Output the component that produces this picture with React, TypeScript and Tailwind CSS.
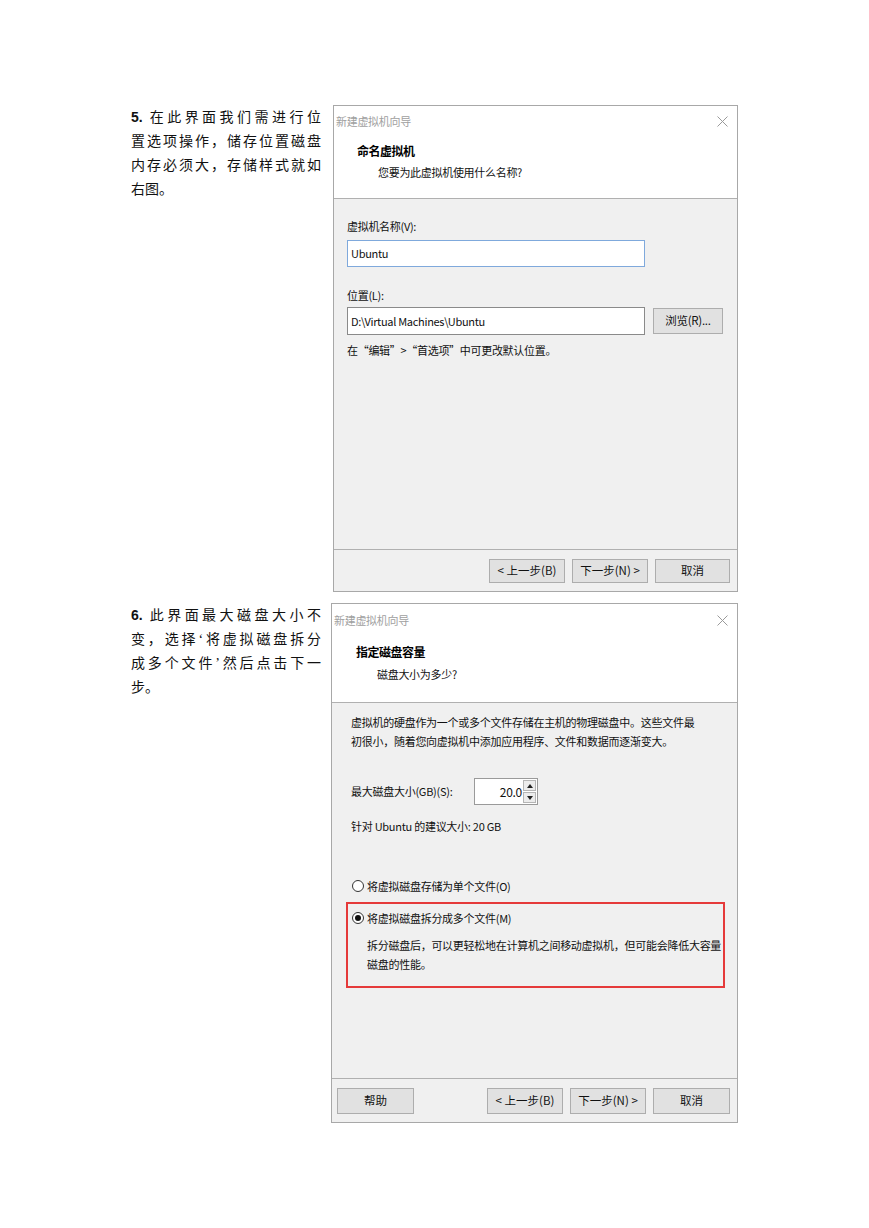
import React from 'react';

const UI = { fontFamily: '"Noto Sans CJK SC", "Liberation Sans", sans-serif' };
const DOC = { fontFamily: '"Liberation Serif", "Noto Sans CJK SC", serif' };

function CloseX() {
  return (
    <svg width="11" height="11" viewBox="0 0 11 11" className="shrink-0">
      <path d="M0.5 0.5 L10.5 10.5 M10.5 0.5 L0.5 10.5" stroke="#9a9a9a" strokeWidth="1" fill="none" />
    </svg>
  );
}

function Btn({ children, w, h = 'h-[24px]' }: { children: React.ReactNode; w: string; h?: string }) {
  return (
    <div
      className={`${w} ${h} flex items-center justify-center border border-[#adadad] bg-[#e1e1e1] text-[11.5px] text-[#111]`}
    >
      {children}
    </div>
  );
}

function Radio({ checked }: { checked?: boolean }) {
  return (
    <div className="flex h-[12px] w-[12px] shrink-0 items-center justify-center rounded-full border border-[#333] bg-white">
      {checked && <div className="h-[6px] w-[6px] rounded-full bg-[#111]" />}
    </div>
  );
}

function Para({ lines }: { lines: React.ReactNode[] }) {
  return (
    <div className="w-[190px] shrink-0 text-[14px] leading-[24px] text-[#111]" style={DOC}>
      {lines.map((l, i) => (
        <div key={i} className={i < lines.length - 1 ? 'text-justify [text-align-last:justify]' : ''}>
          {l}
        </div>
      ))}
    </div>
  );
}

function TitleBar({ h }: { h: string }) {
  return (
    <div className={`${h} flex items-center justify-between pl-[2px] pr-[9px]`}>
      <span className="text-[11px] tracking-[-0.3px] text-[#a0a0a0]">新建虚拟机向导</span>
      <CloseX />
    </div>
  );
}

export default function App() {
  return (
    <div className="min-h-[1228px] bg-white pl-[131px] pt-[105px]" style={UI}>
      {/* step 5 */}
      <div className="flex gap-[12px]">
        <Para
          lines={[
            <>
              <span className="font-semibold" style={{ fontFamily: '"Liberation Sans", sans-serif' }}>5.</span> 在此界面我们需进行位
            </>,
            '置选项操作，储存位置磁盘',
            '内存必须大，存储样式就如',
            '右图。',
          ]}
        />
        <div className="flex h-[487px] w-[405px] flex-col border border-[#a8a8a8]" style={UI}>
          <div className="bg-white">
            <TitleBar h="h-[30px]" />
            <div className="pb-[17px] pl-[23px] pt-[6px]">
              <div className="text-[12px] font-bold leading-[18px] tracking-[-0.5px] text-black">命名虚拟机</div>
              <div className="mt-[3px] pl-[21px] text-[11px] leading-[18px] tracking-[-0.3px] text-[#111]">
                您要为此虚拟机使用什么名称?
              </div>
            </div>
          </div>
          <div className="flex flex-1 flex-col border-t border-[#b0b0b0] bg-[#f0f0f0] pl-[13px] pt-[18px] text-[11px] tracking-[-0.3px] text-[#111]">
            <div className="leading-[18px]">虚拟机名称(V):</div>
            <div className="mt-[5px] flex h-[27px] w-[298px] items-center border border-[#7fa9dc] bg-white pl-[3px]">
              Ubuntu
            </div>
            <div className="mt-[19px] leading-[18px]">位置(L):</div>
            <div className="mt-[3px] flex items-center gap-[8px]">
              <div className="flex h-[28px] w-[298px] items-center border border-[#8a8a8a] bg-white pl-[3px]">
                D:\Virtual Machines\Ubuntu
              </div>
              <Btn w="w-[70px]" h="h-[26px]">浏览(R)...</Btn>
            </div>
            <div className="mt-[6px] leading-[18px]">在“编辑”&gt;“首选项”中可更改默认位置。</div>
          </div>
          <div className="flex h-[42px] justify-end gap-[7px] border-t border-[#b0b0b0] bg-[#f0f0f0] pr-[7px] pt-[9px]">
            <Btn w="w-[76px]">&lt; 上一步(B)</Btn>
            <Btn w="w-[76px]">下一步(N) &gt;</Btn>
            <Btn w="w-[75px]">取消</Btn>
          </div>
        </div>
      </div>

      {/* step 6 */}
      <div className="mt-[11px] flex gap-[10px]">
        <Para
          lines={[
            <>
              <span className="font-semibold" style={{ fontFamily: '"Liberation Sans", sans-serif' }}>6.</span> 此界面最大磁盘大小不
            </>,
            '变，选择‘将虚拟磁盘拆分',
            '成多个文件’然后点击下一',
            '步。',
          ]}
        />
        <div className="flex h-[520px] w-[407px] flex-col border border-[#a8a8a8]" style={UI}>
          <div className="bg-white">
            <TitleBar h="h-[32px]" />
            <div className="pb-[18px] pl-[24px] pt-[6px]">
              <div className="text-[12px] font-bold leading-[20px] tracking-[-0.5px] text-black">指定磁盘容量</div>
              <div className="mt-[2px] pl-[21px] text-[11px] leading-[20px] tracking-[-0.3px] text-[#111]">
                磁盘大小为多少?
              </div>
            </div>
          </div>
          <div className="flex flex-1 flex-col border-t border-[#b0b0b0] bg-[#f0f0f0] pl-[19px] pt-[10px] text-[11px] tracking-[-0.27px] text-[#111]">
            <div className="leading-[19px]">
              虚拟机的硬盘作为一个或多个文件存储在主机的物理磁盘中。这些文件最
              <br />
              初很小，随着您向虚拟机中添加应用程序、文件和数据而逐渐变大。
            </div>
            <div className="mt-[27px] flex items-center">
              <div className="w-[123px]">最大磁盘大小(GB)(S):</div>
              <div className="flex h-[27px] border border-[#9a9a9a] bg-white">
                <div className="flex w-[48px] items-center justify-end pr-[1px] text-[12px]">20.0</div>
                <div className="flex w-[14px] flex-col gap-[1px] py-[1px] pr-[1px]">
                  <div className="flex flex-1 items-center justify-center border border-[#b5b5b5] bg-[#ececec]">
                    <svg width="6" height="4" viewBox="0 0 6 4"><path d="M0 4 L3 0 L6 4 Z" fill="#222" /></svg>
                  </div>
                  <div className="flex flex-1 items-center justify-center border border-[#b5b5b5] bg-[#ececec]">
                    <svg width="6" height="4" viewBox="0 0 6 4"><path d="M0 0 L3 4 L6 0 Z" fill="#222" /></svg>
                  </div>
                </div>
              </div>
            </div>
            <div className="mt-[12px] leading-[18px]">针对 Ubuntu 的建议大小: 20 GB</div>
            <div className="ml-[1px] mt-[42px] flex items-center gap-[3px] leading-[18px]">
              <Radio />
              <span>将虚拟磁盘存储为单个文件(O)</span>
            </div>
            <div className="-ml-[5px] mt-[7px] w-[379px] border-2 border-[#e53a3a] pb-[12px] pl-[4px] pt-[5px]">
              <div className="flex items-center gap-[3px] leading-[18px]">
                <Radio checked />
                <span>将虚拟磁盘拆分成多个文件(M)</span>
              </div>
              <div className="mt-[9px] pl-[15px] leading-[19px]">
                拆分磁盘后，可以更轻松地在计算机之间移动虚拟机，但可能会降低大容量
                <br />
                磁盘的性能。
              </div>
            </div>
          </div>
          <div className="flex h-[44px] items-start justify-between border-t border-[#b0b0b0] bg-[#f0f0f0] pl-[5px] pr-[7px] pt-[9px]">
            <Btn w="w-[77px]" h="h-[26px]">帮助</Btn>
            <div className="flex gap-[7px]">
              <Btn w="w-[76px]" h="h-[26px]">&lt; 上一步(B)</Btn>
              <Btn w="w-[76px]" h="h-[26px]">下一步(N) &gt;</Btn>
              <Btn w="w-[77px]" h="h-[26px]">取消</Btn>
            </div>
          </div>
        </div>
      </div>
    </div>
  );
}
